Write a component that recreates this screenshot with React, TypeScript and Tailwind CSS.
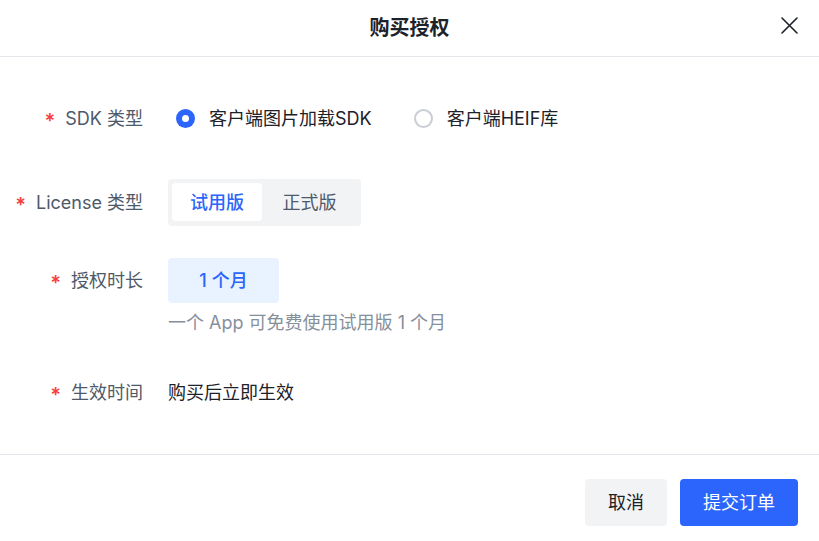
const font = { fontFamily: 'Inter, "Noto Sans CJK SC", sans-serif' };

function Label({ text }: { text: string }) {
  return (
    <div className="w-[143px] shrink-0 flex items-center justify-end gap-[10px] text-[18px] text-[#4e5969]">
      <span className="text-[#f53f3f] text-[20px] font-semibold leading-none pt-[5px]">*</span>
      <span>{text}</span>
    </div>
  );
}

function Radio({ checked, text }: { checked?: boolean; text: string }) {
  return (
    <label className="flex items-center gap-[14px] text-[18px] text-[#1d2129]">
      {checked ? (
        <span className="w-[19px] h-[19px] rounded-full bg-[#2b65fb] flex items-center justify-center">
          <span className="w-[7px] h-[7px] rounded-full bg-white" />
        </span>
      ) : (
        <span className="w-[19px] h-[19px] rounded-full border-2 border-[#c9cdd4]" />
      )}
      {text}
    </label>
  );
}

export default function App() {
  return (
    <div className="w-[819px] h-[541px] bg-white flex flex-col" style={font}>
      {/* Header */}
      <div className="h-[57px] border-b border-[#e5e6eb] flex items-center justify-center relative">
        <h2 className="text-[20px] font-semibold text-[#1d2129]">购买授权</h2>
        <button className="absolute right-[21px] top-[17px] text-[#1d2129]">
          <svg width="17" height="17" viewBox="0 0 17 17" fill="none" stroke="currentColor" strokeWidth={1.6} strokeLinecap="round">
            <path d="M1 1L16 16M16 1L1 16" />
          </svg>
        </button>
      </div>

      {/* Body */}
      <div className="flex-1 pt-[37px]">
        <div className="flex h-12 gap-[25px]">
          <Label text="SDK 类型" />
          <div className="flex items-center gap-[42px] ml-[8px]">
            <Radio checked text="客户端图片加载SDK" />
            <Radio text="客户端HEIF库" />
          </div>
        </div>

        <div className="flex h-[47px] gap-[25px] mt-[37px]">
          <Label text="License 类型" />
          <div className="flex bg-[#f2f3f5] rounded p-[4px] pb-[5px] text-[18px]">
            <button className="w-[90px] bg-white rounded text-[#2b65fb] font-medium">试用版</button>
            <button className="w-[95px] text-[#4e5969]">正式版</button>
          </div>
        </div>

        <div className="flex gap-[25px] mt-[32px]">
          <div className="h-[45px] flex">
            <Label text="授权时长" />
          </div>
          <div className="flex flex-col">
            <div className="w-[111px] h-[45px] bg-[#e8f3ff] rounded-sm flex items-center justify-center text-[18px] font-medium text-[#2b65fb]">
              1 个月
            </div>
            <p className="mt-[7px] text-[18px] leading-[26px] text-[#86909c]">一个 App 可免费使用试用版 1 个月</p>
          </div>
        </div>

        <div className="flex h-12 gap-[25px] mt-[32px]">
          <Label text="生效时间" />
          <div className="flex items-center text-[18px] text-[#1d2129]">购买后立即生效</div>
        </div>
      </div>

      {/* Footer */}
      <div className="border-t border-[#e5e6eb] h-[87px] flex items-start justify-end gap-[13px] pt-[24px] pr-[21px]">
        <button className="w-[82px] h-[47px] rounded bg-[#f2f3f5] text-[18px] text-[#1d2129]">取消</button>
        <button className="w-[118px] h-[47px] rounded bg-[#2b65fb] text-[18px] text-white">提交订单</button>
      </div>
    </div>
  );
}
